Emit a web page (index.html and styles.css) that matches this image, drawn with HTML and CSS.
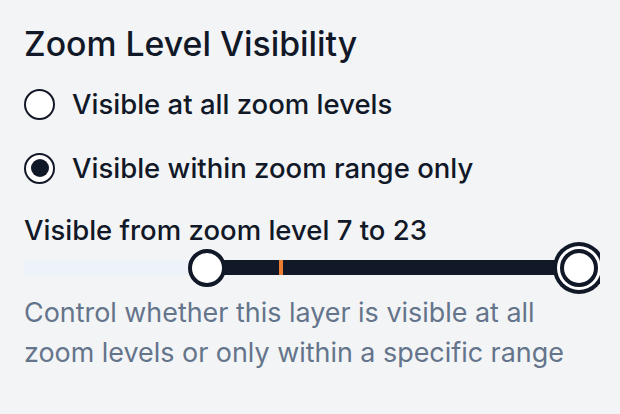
FILE: index.html
```html
<!DOCTYPE html>
<html>
<head>
<meta charset="utf-8">
<link rel="stylesheet" href="styles.css">
</head>
<body>
<div class="panel">
  <h2 class="title">Zoom Level Visibility</h2>
  <div class="options">
    <label class="option">
      <span class="radio"></span>
      <span class="option-text">Visible at all zoom levels</span>
    </label>
    <label class="option">
      <span class="radio checked"><span class="dot"></span></span>
      <span class="option-text">Visible within zoom range only</span>
    </label>
  </div>
  <div class="range-label">Visible from zoom level 7 to 23</div>
  <div class="slider">
    <div class="track">
      <div class="track-before"></div>
      <div class="track-fill"><span class="tick"></span></div>
      <div class="track-after"></div>
    </div>
    <span class="thumb thumb-min"></span>
    <span class="thumb thumb-max"></span>
  </div>
  <p class="help">Control whether this layer is visible at all zoom levels or only within a specific range</p>
</div>
</body>
</html>
```

FILE: styles.css
```css
html, body {
  margin: 0;
  padding: 0;
  background: #f3f4f6;
}

.panel {
  font-family: Inter, "Noto Sans", sans-serif;
  color: #111827;
  padding: 24px 20px 0 24px;
  width: 576px;
}

.title {
  margin: 0;
  font-size: 33.8px;
  line-height: 40px;
  font-weight: 500;
}

.options {
  display: flex;
  flex-direction: column;
  gap: 32px;
  margin-top: 24px;
}

.option {
  display: flex;
  align-items: center;
  gap: 17px;
  height: 32px;
}

.radio {
  box-sizing: border-box;
  width: 31px;
  height: 31px;
  border: 2px solid #111827;
  border-radius: 50%;
  background: #ffffff;
  display: flex;
  align-items: center;
  justify-content: center;
}

.dot {
  width: 18px;
  height: 18px;
  border-radius: 50%;
  background: #111827;
}

.option-text,
.range-label {
  font-size: 27.5px;
  line-height: 32px;
  font-weight: 500;
}

.range-label {
  margin-top: 30px;
}

.slider {
  position: relative;
  height: 41px;
  margin-top: 1px;
  overflow-x: clip;
  overflow-y: visible;
  display: flex;
  align-items: center;
}

.track {
  display: flex;
  width: 100%;
  height: 15px;
}

.track-before {
  width: 183px;
  background: #eef2f9;
}

.track-fill {
  position: relative;
  width: 372px;
  background: #111827;
}

.track-after {
  flex: 1;
  background: #eef2f9;
}

.tick {
  position: absolute;
  left: 72px;
  top: 0;
  width: 4px;
  height: 100%;
  background: #ed7d31;
}

.thumb {
  position: absolute;
  box-sizing: border-box;
  width: 38px;
  height: 38px;
  border: 4px solid #111827;
  border-radius: 50%;
  background: #ffffff;
  top: 50%;
  transform: translate(-50%, -50%);
}

.thumb-min {
  left: 183px;
}

.thumb-max {
  left: 555px;
  box-shadow: 0 0 0 3px #ffffff, 0 0 0 7px #111827;
}

.help {
  margin: 4px 0 0 0;
  font-size: 26.9px;
  line-height: 40px;
  color: #64748b;
  width: 548px;
}
```
